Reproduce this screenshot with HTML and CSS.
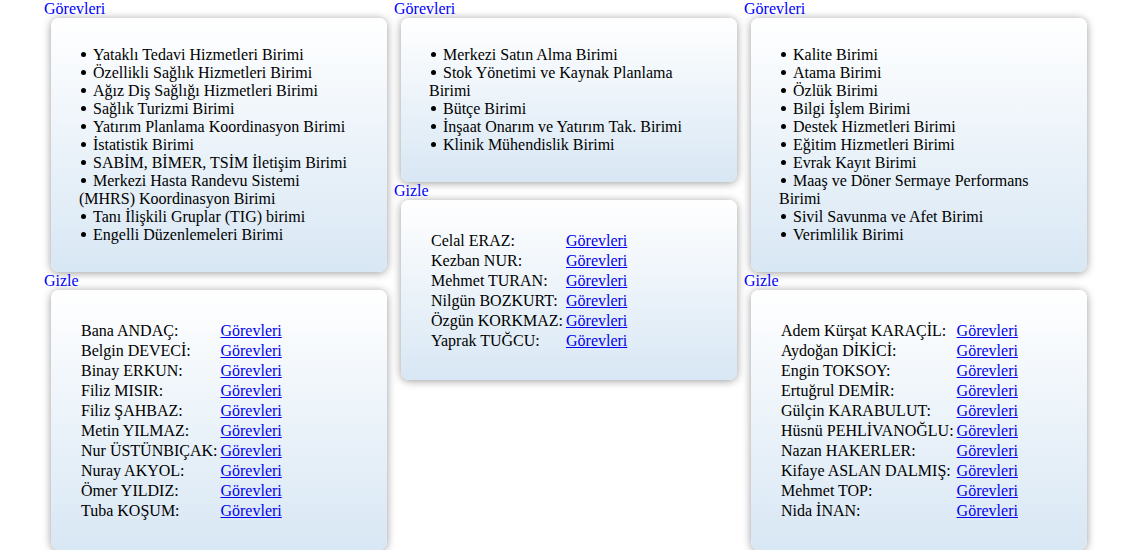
FILE: index.html
```html
<!DOCTYPE html>
<html lang="tr">
<head>
<meta charset="utf-8">
<title>Görevler</title>
<link rel="stylesheet" href="styles.css">
</head>
<body>
<div class="page">
  <div class="col">
    <div class="label">Görevleri</div>
    <div class="card">
      <ul class="list">
        <li>Yataklı Tedavi Hizmetleri Birimi</li>
        <li>Özellikli Sağlık Hizmetleri Birimi</li>
        <li>Ağız Diş Sağlığı Hizmetleri Birimi</li>
        <li>Sağlık Turizmi Birimi</li>
        <li>Yatırım Planlama Koordinasyon Birimi</li>
        <li>İstatistik Birimi</li>
        <li>SABİM, BİMER, TSİM İletişim Birimi</li>
        <li>Merkezi Hasta Randevu Sistemi (MHRS) Koordinasyon Birimi</li>
        <li>Tanı İlişkili Gruplar (TIG) birimi</li>
        <li>Engelli Düzenlemeleri Birimi</li>
      </ul>
    </div>
    <div class="label">Gizle</div>
    <div class="card card-table">
      <table class="people">
        <tr><td>Bana ANDAÇ:</td><td><a href="#">Görevleri</a></td></tr>
        <tr><td>Belgin DEVECİ:</td><td><a href="#">Görevleri</a></td></tr>
        <tr><td>Binay ERKUN:</td><td><a href="#">Görevleri</a></td></tr>
        <tr><td>Filiz MISIR:</td><td><a href="#">Görevleri</a></td></tr>
        <tr><td>Filiz ŞAHBAZ:</td><td><a href="#">Görevleri</a></td></tr>
        <tr><td>Metin YILMAZ:</td><td><a href="#">Görevleri</a></td></tr>
        <tr><td>Nur ÜSTÜNBIÇAK:</td><td><a href="#">Görevleri</a></td></tr>
        <tr><td>Nuray AKYOL:</td><td><a href="#">Görevleri</a></td></tr>
        <tr><td>Ömer YILDIZ:</td><td><a href="#">Görevleri</a></td></tr>
        <tr><td>Tuba KOŞUM:</td><td><a href="#">Görevleri</a></td></tr>
      </table>
    </div>
  </div>

  <div class="col">
    <div class="label">Görevleri</div>
    <div class="card">
      <ul class="list">
        <li>Merkezi Satın Alma Birimi</li>
        <li>Stok Yönetimi ve Kaynak Planlama Birimi</li>
        <li>Bütçe Birimi</li>
        <li>İnşaat Onarım ve Yatırım Tak. Birimi</li>
        <li>Klinik Mühendislik Birimi</li>
      </ul>
    </div>
    <div class="label">Gizle</div>
    <div class="card card-table">
      <table class="people">
        <tr><td>Celal ERAZ:</td><td><a href="#">Görevleri</a></td></tr>
        <tr><td>Kezban NUR:</td><td><a href="#">Görevleri</a></td></tr>
        <tr><td>Mehmet TURAN:</td><td><a href="#">Görevleri</a></td></tr>
        <tr><td>Nilgün BOZKURT:</td><td><a href="#">Görevleri</a></td></tr>
        <tr><td>Özgün KORKMAZ:</td><td><a href="#">Görevleri</a></td></tr>
        <tr><td>Yaprak TUĞCU:</td><td><a href="#">Görevleri</a></td></tr>
      </table>
    </div>
  </div>

  <div class="col">
    <div class="label">Görevleri</div>
    <div class="card">
      <ul class="list">
        <li>Kalite Birimi</li>
        <li>Atama Birimi</li>
        <li>Özlük Birimi</li>
        <li>Bilgi İşlem Birimi</li>
        <li>Destek Hizmetleri Birimi</li>
        <li>Eğitim Hizmetleri Birimi</li>
        <li>Evrak Kayıt Birimi</li>
        <li>Maaş ve Döner Sermaye Performans Birimi</li>
        <li>Sivil Savunma ve Afet Birimi</li>
        <li>Verimlilik Birimi</li>
      </ul>
    </div>
    <div class="label">Gizle</div>
    <div class="card card-table">
      <table class="people">
        <tr><td>Adem Kürşat KARAÇİL:</td><td><a href="#">Görevleri</a></td></tr>
        <tr><td>Aydoğan DİKİCİ:</td><td><a href="#">Görevleri</a></td></tr>
        <tr><td>Engin TOKSOY:</td><td><a href="#">Görevleri</a></td></tr>
        <tr><td>Ertuğrul DEMİR:</td><td><a href="#">Görevleri</a></td></tr>
        <tr><td>Gülçin KARABULUT:</td><td><a href="#">Görevleri</a></td></tr>
        <tr><td>Hüsnü PEHLİVANOĞLU:</td><td><a href="#">Görevleri</a></td></tr>
        <tr><td>Nazan HAKERLER:</td><td><a href="#">Görevleri</a></td></tr>
        <tr><td>Kifaye ASLAN DALMIŞ:</td><td><a href="#">Görevleri</a></td></tr>
        <tr><td>Mehmet TOP:</td><td><a href="#">Görevleri</a></td></tr>
        <tr><td>Nida İNAN:</td><td><a href="#">Görevleri</a></td></tr>
      </table>
    </div>
  </div>
</div>
</body>
</html>
```

FILE: styles.css
```css
html, body {
  margin: 0;
  padding: 0;
  background: #ffffff;
}

body {
  font-family: "Liberation Serif", "Times New Roman", serif;
  font-size: 16px;
  line-height: 18px;
  color: #000000;
}

.page {
  display: flex;
  align-items: flex-start;
  padding-left: 44px;
}

.col {
  width: 350px;
  display: flex;
  flex-direction: column;
  align-items: flex-start;
}

.label {
  color: #0000ff;
  height: 18px;
  line-height: 18px;
  cursor: pointer;
}

.card {
  box-sizing: border-box;
  width: 336px;
  margin-left: 7px;
  padding: 28px 36px 28px 28px;
  border-radius: 8px;
  background: linear-gradient(to bottom, #ffffff 0%, #d8e7f4 100%);
  box-shadow: 0 1px 8px rgba(0, 0, 0, 0.4);
}

.list {
  margin: 0;
  padding: 0;
  list-style: none;
}

.list li {
  line-height: 18px;
}

.list li::before {
  content: "";
  display: inline-block;
  width: 5px;
  height: 5px;
  border-radius: 50%;
  background: #000000;
  margin: 0 7px 0 2px;
  vertical-align: 3px;
}

.card-table {
  padding: 31px 20px 29px 28px;
}

.people {
  border-collapse: collapse;
  border-spacing: 0;
}

.people td {
  padding: 0;
  line-height: 20px;
  white-space: nowrap;
  vertical-align: top;
}

.people td:first-child {
  padding-left: 2px;
  padding-right: 3px;
}

.people a {
  color: #0000ee;
  text-decoration: underline;
}
```
